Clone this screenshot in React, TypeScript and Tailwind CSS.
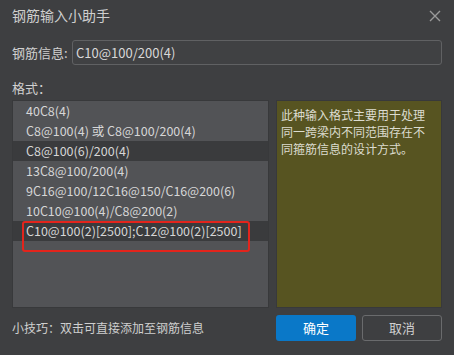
import React from "react";

const formats = [
  "40C8(4)",
  "C8@100(4) 或 C8@100/200(4)",
  "C8@100(6)/200(4)",
  "13C8@100/200(4)",
  "9C16@100/12C16@150/C16@200(6)",
  "10C10@100(4)/C8@200(2)",
  "C10@100(2)[2500];C12@100(2)[2500]",
];

const dark = [2, 6];

export default function App() {
  return (
    <div
      className="w-[454px] h-[355px] bg-[#3e3f41] text-[#d4d4d4] flex flex-col overflow-hidden"
      style={{ fontFamily: '"Noto Sans CJK SC", "Open Sans", sans-serif' }}
    >
      <div className="h-[31px] flex items-center justify-between pl-[12px] pr-[13px]">
        <span className="text-[14px] text-[#cfcfcf]">钢筋输入小助手</span>
        <svg width="12" height="12" viewBox="0 0 12 12" className="text-[#9a9a9a]">
          <path d="M1 1 L11 11 M11 1 L1 11" stroke="currentColor" strokeWidth="1.4" />
        </svg>
      </div>

      <div className="flex items-center mt-[9px] pl-[12px] pr-[12px] gap-[2px]">
        <span className="w-[58px] text-[13px] text-[#d0d0d0]">钢筋信息:</span>
        <input
          defaultValue="C10@100/200(4)"
          className="flex-1 h-[25px] rounded-[3px] border border-[#606163] bg-[#404143] px-[3px] text-[13px] text-[#d8d8d8] outline-none"
        />
      </div>

      <div className="pl-[12px] mt-[13px] text-[13px] text-[#d0d0d0] leading-[20px]">格式：</div>

      <div className="flex gap-[7px] px-[12px] mt-[2px] h-[208px]">
        <div className="w-[257px] h-full bg-[#525356] border border-[#38393b] flex flex-col relative">
          {formats.map((f, i) => (
            <div
              key={f}
              className={`h-[20px] flex items-center pl-[13px] text-[12.5px] whitespace-nowrap text-[#d6d6d6] ${
                dark.includes(i) ? "bg-[#3a3b3d]" : ""
              }`}
            >
              {f}
            </div>
          ))}
          <div className="absolute left-[9px] top-[120px] w-[228px] h-[31px] border-2 border-[#e3241c] rounded-[3px]" />
        </div>
        <div className="flex-1 h-full bg-[#575421] border border-[#38393b] pl-[4px] pr-[14px] pt-[5px] text-[12px] leading-[17px] text-[#dcdcd0]">
          此种输入格式主要用于处理同一跨梁内不同范围存在不同箍筋信息的设计方式。
        </div>
      </div>

      <div className="flex items-center justify-between pl-[12px] pr-[12px] mt-[7px]">
        <span className="text-[12px] text-[#cfcfcf]">小技巧：双击可直接添加至钢筋信息</span>
        <div className="flex gap-[6px]">
          <button className="w-[80px] h-[26px] rounded-[3px] bg-[#0a78c8] text-[13px] text-white">确定</button>
          <button className="w-[80px] h-[26px] rounded-[3px] border border-[#6a6b6d] bg-[#3e3f41] text-[13px] text-[#cfcfcf]">
            取消
          </button>
        </div>
      </div>
    </div>
  );
}
